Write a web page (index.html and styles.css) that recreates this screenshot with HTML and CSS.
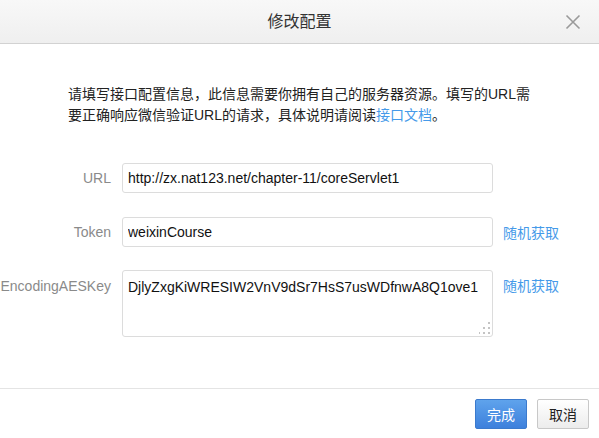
FILE: index.html
```html
<!DOCTYPE html>
<html lang="zh-CN">
<head>
<meta charset="utf-8">
<title>修改配置</title>
<link rel="stylesheet" href="styles.css">
</head>
<body>
<div class="dialog">
  <div class="dlg-head">
    <h3 class="dlg-title">修改配置</h3>
    <span class="dlg-close" aria-label="关闭">
      <svg width="16" height="16" viewBox="0 0 16 16"><path d="M1.5 1.5 L14.5 14.5 M14.5 1.5 L1.5 14.5" stroke="#9a9a9a" stroke-width="1.6" fill="none"/></svg>
    </span>
  </div>
  <div class="dlg-body">
    <p class="intro">请填写接口配置信息，此信息需要你拥有自己的服务器资源。填写的URL需要正确响应微信验证URL的请求，具体说明请阅读<a class="link" href="#">接口文档</a>。</p>
    <div class="form">
      <div class="row">
        <label class="lbl">URL</label>
        <input class="field" type="text" value="http://zx.nat123.net/chapter-11/coreServlet1">
      </div>
      <div class="row row-token">
        <label class="lbl">Token</label>
        <input class="field" type="text" value="weixinCourse">
        <a class="link gen" href="#">随机获取</a>
      </div>
      <div class="row row-top">
        <label class="lbl lbl-top">EncodingAESKey</label>
        <div class="area-wrap">
          <textarea class="area">DjlyZxgKiWRESIW2VnV9dSr7HsS7usWDfnwA8Q1ove1</textarea>
          <span class="grip">
            <svg width="12" height="12" viewBox="0 0 12 12" fill="#c4c4c4"><rect x="9" y="0" width="2" height="2"/><rect x="4" y="5" width="2" height="2"/><rect x="9" y="5" width="2" height="2"/><rect x="-1" y="10" width="2" height="2"/><rect x="4" y="10" width="2" height="2"/><rect x="9" y="10" width="2" height="2"/></svg>
          </span>
        </div>
        <a class="link gen gen-top" href="#">随机获取</a>
      </div>
    </div>
  </div>
  <div class="dlg-foot">
    <button class="btn btn-primary" type="button">完成</button>
    <button class="btn btn-default" type="button">取消</button>
  </div>
</div>
</body>
</html>
```

FILE: styles.css
```css
html, body {
  margin: 0;
  padding: 0;
  background: #ffffff;
}

body {
  font-family: "Liberation Sans", "Noto Sans CJK SC", sans-serif;
  font-size: 14px;
  color: #222222;
}

.dialog {
  width: 599px;
  height: 438px;
  display: flex;
  flex-direction: column;
  background: #ffffff;
}

.dlg-head {
  height: 43px;
  border-bottom: 1px solid #d2d2d2;
  background: linear-gradient(#f8f8f8, #efefef);
  display: flex;
  align-items: center;
  justify-content: center;
  position: relative;
  flex: none;
}

.dlg-title {
  margin: 0;
  font-size: 16px;
  font-weight: normal;
  color: #333333;
  line-height: 43px;
}

.dlg-close {
  position: absolute;
  right: 18px;
  top: 14px;
  width: 16px;
  height: 16px;
  display: block;
}

.dlg-close svg {
  display: block;
}

.dlg-body {
  flex: 1;
  padding: 40px 0 0 0;
}

.intro {
  margin: 0 0 0 68px;
  width: 470px;
  line-height: 21px;
  color: #222222;
}

.link {
  color: #459ae9;
  text-decoration: none;
}

.form {
  margin-top: 37px;
}

.row {
  display: flex;
  align-items: center;
  margin-bottom: 24px;
}

.row-token {
  margin-bottom: 23px;
}

.row-top {
  align-items: flex-start;
  margin-bottom: 0;
}

.lbl {
  width: 111px;
  text-align: right;
  color: #8a8a8a;
  margin-right: 11px;
  flex: none;
}

.lbl-top {
  padding-top: 7px;
  line-height: 18px;
}

.field {
  box-sizing: border-box;
  width: 371px;
  height: 30px;
  border: 1px solid #dcdcdc;
  border-radius: 3px;
  padding: 0 5px;
  margin: 0;
  font-family: "Liberation Sans", sans-serif;
  font-size: 14px;
  color: #111111;
  background: #ffffff;
  outline: none;
}

.area-wrap {
  position: relative;
  width: 371px;
  height: 67px;
  flex: none;
}

.area {
  box-sizing: border-box;
  display: block;
  width: 371px;
  height: 67px;
  border: 1px solid #dcdcdc;
  border-radius: 3px;
  padding: 7px 5px;
  margin: 0;
  font-family: "Liberation Sans", sans-serif;
  font-size: 14px;
  line-height: 18px;
  color: #111111;
  resize: none;
  overflow: hidden;
  outline: none;
}

.grip {
  position: absolute;
  right: 2px;
  bottom: 3px;
  width: 12px;
  height: 12px;
}

.grip svg {
  display: block;
}

.gen {
  margin-left: 10px;
  flex: none;
}

.gen-top {
  padding-top: 7px;
  line-height: 18px;
}

.dlg-foot {
  flex: none;
  height: 39px;
  border-top: 1px solid #e4e4e4;
  padding: 10px 10px 0 0;
  display: flex;
  justify-content: flex-end;
  align-items: flex-start;
  gap: 10px;
}

.btn {
  box-sizing: border-box;
  height: 30px;
  width: 52px;
  padding: 0;
  border-radius: 2px;
  font-family: "Liberation Sans", "Noto Sans CJK SC", sans-serif;
  font-size: 14px;
  cursor: pointer;
}

.btn-primary {
  background: linear-gradient(#5fa3ec, #3d80dc);
  border: 1px solid #3b7acd;
  color: #ffffff;
}

.btn-default {
  background: linear-gradient(#ffffff, #ececec);
  border: 1px solid #c8c8c8;
  color: #222222;
}
```
